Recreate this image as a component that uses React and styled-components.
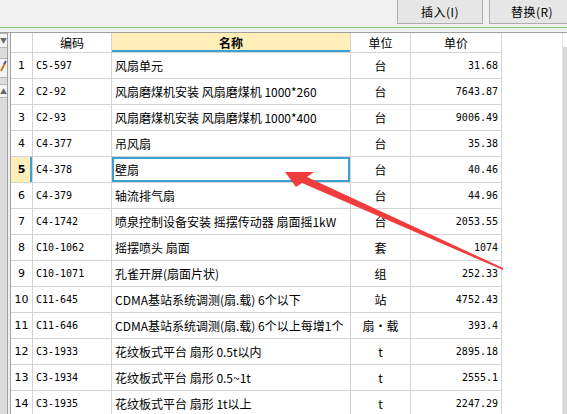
import React from 'react';
import styled, { createGlobalStyle } from 'styled-components';

const GlobalStyle = createGlobalStyle`
  html, body {
    margin: 0;
    padding: 0;
    background: #f0f0f0;
    overflow: hidden;
  }
  body {
    font-family: "Noto Sans CJK SC", sans-serif;
    font-size: 12px;
    color: #000;
  }
`;

const rows = [
  ['C5-597', '风扇单元', '台', '31.68'],
  ['C2-92', '风扇磨煤机安装 风扇磨煤机 1000*260', '台', '7643.87'],
  ['C2-93', '风扇磨煤机安装 风扇磨煤机 1000*400', '台', '9006.49'],
  ['C4-377', '吊风扇', '台', '35.38'],
  ['C4-378', '壁扇', '台', '40.46'],
  ['C4-379', '轴流排气扇', '台', '44.96'],
  ['C4-1742', '喷泉控制设备安装 摇摆传动器 扇面摇1kW', '台', '2053.55'],
  ['C10-1062', '摇摆喷头 扇面', '套', '1074'],
  ['C10-1071', '孔雀开屏(扇面片状)', '组', '252.33'],
  ['C11-645', 'CDMA基站系统调测(扇.载) 6个以下', '站', '4752.43'],
  ['C11-646', 'CDMA基站系统调测(扇.载) 6个以上每增1个', '扇·载', '393.4'],
  ['C3-1933', '花纹板式平台 扇形 0.5t以内', 't', '2895.18'],
  ['C3-1934', '花纹板式平台 扇形 0.5~1t', 't', '2555.1'],
  ['C3-1935', '花纹板式平台 扇形 1t以上', 't', '2247.29'],
];

const SELECTED = 5;

const Page = styled.div`
  position: relative;
  width: 567px;
  height: 414px;
  overflow: hidden;
`;

const TopBar = styled.div`
  display: flex;
  justify-content: flex-end;
  gap: 6px;
  height: 28px;
  margin-right: -8px;
  border-bottom: 1px solid #8cc67c;
  box-sizing: border-box;
`;

const Button = styled.div`
  width: ${(p) => p.w}px;
  height: 25px;
  margin-top: -1px;
  box-sizing: border-box;
  border: 1px solid #adadad;
  background: #e6e6e6;
  display: flex;
  align-items: center;
  justify-content: center;
  font-size: 12px;
  letter-spacing: 0.5px;
`;

const Body = styled.div`
  display: flex;
  margin-top: 4px;
  border-top: 1px solid #a0a0a0;
  height: 382px;
`;

const SideStrip = styled.div`
  width: 7px;
  border-right: 1px solid #a0a0a0;
  background: #dcdcdc;
  display: flex;
  flex-direction: column;
`;

const SideBtn = styled.div`
  height: ${(p) => p.h}px;
  margin-top: ${(p) => p.mt}px;
  background: #f4f4f4;
  border-bottom: 1px solid #b5b5b5;
  border-top: 1px solid #b5b5b5;
  font-size: 7px;
  line-height: ${(p) => p.h}px;
  color: #666;
  overflow: hidden;
`;

const SideGap = styled.div`
  width: 2px;
  background: #f0f0f0;
  border-right: 1px solid #a0a0a0;
`;

const GridArea = styled.div`
  flex: 1;
  display: flex;
  background: #fff;
`;

const Table = styled.div`
  display: grid;
  grid-template-columns: 22px 79px 239px 60px 91px;
  grid-auto-rows: 26px;
  grid-template-rows: 20px;
  align-content: start;
`;

const Cell = styled.div`
  box-sizing: border-box;
  border-right: 1px solid #d4d4d4;
  border-bottom: 1px solid #d4d4d4;
  display: flex;
  align-items: center;
  padding: 0 3px;
  white-space: nowrap;
  overflow: hidden;
  justify-content: ${(p) => (p.align === 'right' ? 'flex-end' : p.align === 'center' ? 'center' : 'flex-start')};
  font-family: ${(p) => (p.mono ? '"DejaVu Sans Mono", "Noto Sans CJK SC", monospace' : '"Noto Sans CJK SC", sans-serif')};
  font-size: ${(p) => (p.mono ? '10px' : '12px')};
`;

const HeadCell = styled(Cell)`
  justify-content: center;
  font-weight: ${(p) => (p.active ? 700 : 400)};
  background: ${(p) => (p.active ? '#ffeeb7' : '#fff')};
  box-shadow: ${(p) => (p.active ? 'inset 0 -2px 0 #3ba1cf' : 'none')};
`;

const NumCell = styled(Cell)`
  justify-content: center;
  font-family: "DejaVu Sans", sans-serif;
  font-size: 11px;
  font-weight: ${(p) => (p.active ? 700 : 400)};
  background: ${(p) => (p.active ? '#ffeeb7' : '#fff')};
  box-shadow: ${(p) => (p.active ? 'inset -2px 0 0 #3ba1cf' : 'none')};
`;

const NameCell = styled(Cell)`
  box-shadow: ${(p) => (p.active ? 'inset 0 0 0 2px #3ba1cf' : 'none')};
`;

const Filler = styled.div`
  flex: 1;
  border-right: 1px solid #e2e2e2;
`;

const Scroll = styled.div`
  width: 4px;
  margin-top: 14px;
  background: #d9d9d9;
`;

const Overlay = styled.svg`
  position: absolute;
  left: 0;
  top: 0;
  pointer-events: none;
`;

export default function App() {
  return (
    <Page>
      <GlobalStyle />
      <TopBar>
        <Button w={86}>插入(I)</Button>
        <Button w={86}>替换(R)</Button>
      </TopBar>
      <Body>
        <SideStrip>
          <SideBtn h={13} mt={0}>▼</SideBtn>
          <SideBtn h={18} mt={10}>
            <svg width="7" height="16" viewBox="0 0 7 16">
              <path d="M1 12 L5 4" stroke="#c77a2a" strokeWidth="2" />
              <path d="M4 5 L6 2" stroke="#6a4a9a" strokeWidth="2" />
            </svg>
          </SideBtn>
          <SideBtn h={12} mt={6}>▲</SideBtn>
        </SideStrip>
        <SideGap />
        <GridArea>
          <Table>
            <HeadCell />
            <HeadCell>编码</HeadCell>
            <HeadCell active>名称</HeadCell>
            <HeadCell>单位</HeadCell>
            <HeadCell>单价</HeadCell>
            {rows.map(([code, name, unit, price], i) => {
              const n = i + 1;
              const active = n === SELECTED;
              return (
                <React.Fragment key={code}>
                  <NumCell active={active}>{n}</NumCell>
                  <Cell mono>{code}</Cell>
                  <NameCell active={active}>{name}</NameCell>
                  <Cell align="center">{unit}</Cell>
                  <Cell mono align="right">{price}</Cell>
                </React.Fragment>
              );
            })}
          </Table>
          <Filler />
          <Scroll />
        </GridArea>
      </Body>
      <Overlay width="567" height="414">
        <polygon
          points="285,172 314,172 307,177 503,268 503,270 302,183 296,187"
          fill="#f03c3c"
        />
      </Overlay>
    </Page>
  );
}
